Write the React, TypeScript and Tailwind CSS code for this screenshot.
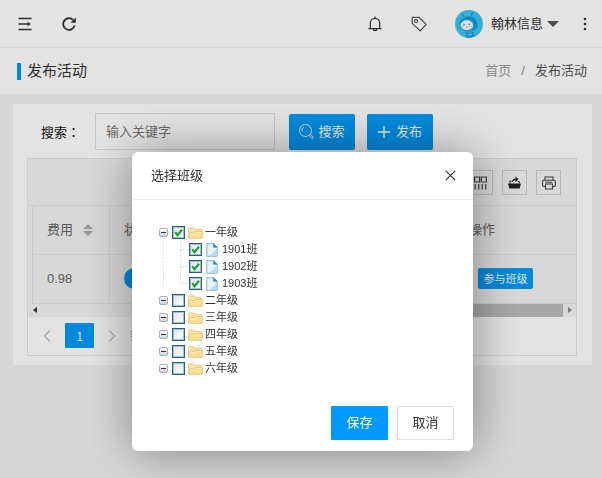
import { useState } from 'react';
import { clsx } from 'clsx';

const grades = [
  { name: '一年级', classes: ['1901班', '1902班', '1903班'] },
  { name: '二年级', classes: [] },
  { name: '三年级', classes: [] },
  { name: '四年级', classes: [] },
  { name: '五年级', classes: [] },
  { name: '六年级', classes: [] },
];

const MenuIcon = () => (
  <svg width="14" height="14" viewBox="0 0 14 14" fill="none" stroke="#333" strokeWidth="1.5">
    <path d="M0.5 1.5h13M0.5 7h6.5M0.5 12.5h13" />
    <path d="M7 7h3" />
    <path d="M9.5 4.8v4.4L13 7z" fill="#333" stroke="none" />
  </svg>
);

const RefreshIcon = () => (
  <svg width="14" height="14" viewBox="0 0 14 14" fill="none" stroke="#333" strokeWidth="1.8">
    <path d="M12.6 8.6A5.8 5.8 0 1 1 11.2 3" />
    <path d="M13.8 0.6v5.2H8.6z" fill="#333" stroke="none" />
  </svg>
);

const BellIcon = () => (
  <svg width="14" height="16" viewBox="0 0 14 16" fill="none" stroke="#333" strokeWidth="1.2">
    <path d="M2.3 12.2V7a4.7 4.7 0 0 1 9.4 0v5.2" />
    <path d="M0.4 12.6h13.2M7 2.3V0.6M5.2 12.8a1.8 1.9 0 0 0 3.6 0" />
  </svg>
);

const TagIcon = () => (
  <svg width="16" height="16" viewBox="0 0 16 16" fill="none" stroke="#444" strokeWidth="1.1" strokeLinejoin="round">
    <path d="M1.2 1.2h6.6l7.4 7.2-6 6.4L1.2 7.4z" />
    <circle cx="5" cy="5" r="1.5" />
  </svg>
);

const Avatar = () => (
  <svg width="28" height="28" viewBox="0 0 28 28">
    <circle cx="14" cy="14" r="14" fill="#3cc4ea" />
    <path d="M8 5.5l2 2.500M17 3.500l-1 3" stroke="#0f8fcc" strokeWidth="1" />
    <circle cx="7.800" cy="5" r="1.100" fill="#0f9de0" />
    <circle cx="17.400" cy="3.600" r="1.100" fill="#0f9de0" />
    <path d="M4.200 14.500C4.200 9 8.500 6.200 13.500 6.200S23 9 22.800 15c-.2 4.500-4 6.500-9.300 6.500s-9.300-2.500-9.300-7z" fill="#18a4e6" />
    <path d="M9.500 8.800c5-2.300 10.500 0 11.300 4.800.4 3-1 5-2.500 6" fill="none" stroke="#0b84c8" strokeWidth="1.100" />
    <ellipse cx="11.800" cy="15.300" rx="6.200" ry="5" fill="#f1f8fb" />
    <circle cx="9" cy="14.800" r=".7" fill="#445" />
    <circle cx="14.200" cy="14.300" r=".7" fill="#445" />
    <path d="M11 16.800q1 .7 1.800 0" fill="none" stroke="#b66" strokeWidth=".7" />
    <circle cx="7.600" cy="16.800" r=".9" fill="#f5b9c6" />
    <circle cx="15.800" cy="16.300" r=".9" fill="#f5b9c6" />
    <path d="M10.500 21.800l4 1.200 4-1.700 1.200 5a14 14 0 0 1-8.500 1.300z" fill="#1f9fdf" />
    <path d="M12.500 24.300l2.500 1 2-1.500" fill="none" stroke="#c9eefa" strokeWidth=".8" />
  </svg>
);

const SearchIcon = () => (
  <svg width="15" height="16" viewBox="0 0 15 16" fill="none" stroke="#fff" strokeWidth=".9">
    <circle cx="6.500" cy="6.500" r="6" />
    <path d="M3 7.500a3.600 3.600 0 0 1 2-4.300" />
    <path d="M10.300 11.500l1.200-1.200 3 3-1.200 1.500z" />
  </svg>
);

const ColumnsIcon = () => (
  <svg width="13" height="14" viewBox="0 0 13 14" fill="none" stroke="#444" strokeWidth="1.200">
    <path d="M.6 1h5v5h-5zM7.400 1h5v5h-5zM1.200 8v5.500M4.700 8v5.500M8.200 8v5.500M11.700 8v5.500" />
  </svg>
);

const ExportIcon = () => (
  <svg width="13" height="13" viewBox="0 0 13 13">
    <path d="M.3 7.500h12.400v.8l-1 4.200H1.300l-1-4.200z" fill="#222" />
    <path d="M1.800 7.500V5h1.700M9.800 5.500h1.500v2" fill="none" stroke="#333" />
    <path d="M3.800 6.500c.2-2.500 1.500-4 3.700-4V.5l3 2.800-3 2.700V4.400c-1.500 0-2.700.6-3.700 2.100z" fill="#222" />
  </svg>
);

const PrintIcon = () => (
  <svg width="14" height="14" viewBox="0 0 14 14" fill="none" stroke="#444" strokeWidth="1.100">
    <path d="M3 4V1h8v3M3 10.500H1.800q-1.200 0-1.200-1.200V5.500Q.6 4.200 1.800 4.200h10.400q1.200 0 1.200 1.300v3.800q0 1.200-1.200 1.200H11" />
    <path d="M3.500 8h7v5h-7zM3.500 6.200h7" />
  </svg>
);

const FolderIcon = () => (
  <svg width="15" height="12" viewBox="0 0 15 12">
    <path d="M.6 11V1.800q0-1 1-1h3.700l1.300 1.500h6.200q1 0 1 1v3" fill="#fbe3a2" stroke="#e6c27a" strokeWidth=".8" />
    <path d="M.6 11.200l.5-4.700q.1-.8.900-.8h4.500l1.300-1.200h6q.8 0 .8.800l-.3 5.200q-.1.900-1 .9z" fill="#fddf92" stroke="#e6bf6e" strokeWidth=".8" />
    <path d="M1.800 6.800h5l1.300-1.200h5.300" fill="none" stroke="#fff3cf" strokeWidth=".8" />
  </svg>
);

const FileIcon = () => (
  <svg width="12" height="14" viewBox="0 0 12 14">
    <path d="M.8.700h6.700l3.700 3.600v9H.8z" fill="#e6f3fc" stroke="#7fa9cc" strokeWidth=".9" />
    <path d="M3.500 12.900h7.300V6z" fill="#b5dcf7" />
    <path d="M7.500.700v3.600h3.700z" fill="#2f86c8" stroke="#3f7fb5" strokeWidth=".6" />
  </svg>
);

const ToolButton = ({ label, children }: any) => (
  <button aria-label={label} className="w-[25px] h-[25px] flex items-center justify-center border border-[#ccc]">
    {children}
  </button>
);

const TreeCheckbox = ({ label, defaultChecked }: any) => (
  <span className="relative flex">
    <input
      type="checkbox"
      aria-label={label}
      defaultChecked={defaultChecked}
      className="peer appearance-none w-[13px] h-[13px] border border-[#2a6078] bg-linear-to-br from-[#dfe4e6] to-white shadow-[inset_0_0_0_1px_#9fc3cf]"
    />
    <svg className="absolute inset-0 hidden peer-checked:block pointer-events-none" width="13" height="13" viewBox="0 0 13 13">
      <path d="M3.200 6.200l2.300 3L10 3.800" fill="none" stroke="#1ba135" strokeWidth="2.200" />
    </svg>
  </span>
);

const ClassTree = () => (
  <ul className="text-[11px] leading-[17px] text-[#333]">
    {grades.map((grade, i) => (
      <li key={grade.name}>
        <div className="flex items-center h-[17px]">
          <button aria-label={`收起${grade.name}`} className="w-[9px] h-[9px] mr-1 flex items-center justify-center rounded-[2px] border border-[#a3b1bb] bg-linear-to-b from-white to-[#ccd4da]">
            <span className="w-[5px] h-px bg-[#333]" />
          </button>
          <TreeCheckbox label={grade.name} defaultChecked={i === 0} />
          <span className="ml-[3px] mr-0.5"><FolderIcon /></span>
          <span>{grade.name}</span>
        </div>
        {grade.classes.length > 0 && (
          <ul>
            {grade.classes.map((name, j) => (
              <li key={name} className="flex items-center h-[17px]">
                <span className="ml-1 w-[17px] h-full border-l border-dotted border-[#ddd]" />
                <span className="w-2 h-full mr-px flex flex-col">
                  <span className="flex-1 border-l border-b border-dotted border-[#ddd]" />
                  <span className={clsx('flex-1', j < grade.classes.length - 1 && 'border-l border-dotted border-[#ddd]')} />
                </span>
                <TreeCheckbox label={name} defaultChecked />
                <span className="ml-1 mr-1"><FileIcon /></span>
                <span>{name}</span>
              </li>
            ))}
          </ul>
        )}
      </li>
    ))}
  </ul>
);

const ClassDialog = ({ onClose }: any) => (
  <div className="fixed inset-0 z-20 flex items-start justify-center bg-black/10 pt-[152px] pl-[3px]">
    <div role="dialog" aria-label="选择班级" className="w-[341px] rounded-md bg-white shadow-[1px_1px_50px_rgba(0,0,0,0.4)]">
      <div className="h-12 pl-[19px] pr-[17px] flex items-center justify-between border-b border-[#eee] text-[#333]">
        <h2>选择班级</h2>
        <button aria-label="关闭" onClick={onClose}>
          <svg width="11" height="11" viewBox="0 0 11 11" stroke="#333" strokeWidth="1.200">
            <path d="M.8.800l9.400 9.400M10.200.800L.8 10.200" />
          </svg>
        </button>
      </div>
      <div className="pt-6 pl-[27px] h-[206px]">
        <ClassTree />
      </div>
      <div className="flex justify-end gap-[9px] pr-[19px] pb-[11px]">
        <button onClick={onClose} className="w-[57px] h-[34px] rounded-[1px] bg-[#0199ff] text-white">保存</button>
        <button onClick={onClose} className="w-[57px] h-[34px] rounded-[1px] border border-[#dedede] text-[#333]">取消</button>
      </div>
    </div>
  </div>
);

export default function App() {
  const [open, setOpen] = useState(true);

  return (
    <div className="min-h-screen bg-[#f0f0f0] text-[13px] leading-5 text-[#666] font-['Liberation_Sans','Noto_Sans_CJK_SC',sans-serif]">
      {/* Top bar */}
      <header className="h-12 pl-[18px] pr-[15px] flex items-center justify-between bg-[#fdfdfd] border-b border-[#f0f0f0]">
        <div className="flex items-center gap-[30px]">
          <button aria-label="菜单"><MenuIcon /></button>
          <button aria-label="刷新"><RefreshIcon /></button>
        </div>
        <div className="flex items-center text-[#333]">
          <button aria-label="消息" className="mr-[29px]"><BellIcon /></button>
          <button aria-label="标签" className="mr-7"><TagIcon /></button>
          <button className="flex items-center mr-6">
            <Avatar />
            <span className="ml-2 mr-1">翰林信息</span>
            <svg width="12" height="6" viewBox="0 0 12 6"><path d="M0 0h12L6 6z" fill="#555" /></svg>
          </button>
          <button aria-label="更多">
            <svg width="4" height="14" viewBox="0 0 4 14" fill="#333">
              <circle cx="2" cy="2" r="1.300" />
              <circle cx="2" cy="7" r="1.300" />
              <circle cx="2" cy="12" r="1.300" />
            </svg>
          </button>
        </div>
      </header>

      {/* Page title */}
      <div className="h-[46px] pl-[17px] pr-[15px] flex items-center justify-between bg-[#fdfdfd]">
        <div className="flex items-center gap-1.5">
          <span className="w-1 h-[17px] bg-[#0199e8]" />
          <h1 className="text-[15px] text-[#333]">发布活动</h1>
        </div>
        <nav className="flex gap-[10px]">
          <a href="#" className="text-[#999]">首页</a>
          <span className="text-[#888]">/</span>
          <span className="text-[#555]">发布活动</span>
        </nav>
      </div>

      <main className="ml-[13px] mr-[10px] mt-[10px] pl-[14px] pr-[15px] py-[9px] bg-[#fdfdfd]">
        <div className="flex items-center mb-2 pl-[14px]">
          <label htmlFor="keyword" className="w-[54px] text-[#111] font-['Noto_Sans_CJK_TC',sans-serif]">搜索：</label>
          <input
            id="keyword"
            placeholder="输入关键字"
            className="w-[180px] h-[37px] px-[10px] mr-[14px] border border-[#ddd] placeholder:text-[#757575]"
          />
          <button className="w-[66px] h-9 mr-3 flex items-center justify-center gap-1 rounded-[2px] bg-[#0199f5] text-white">
            <SearchIcon />搜索
          </button>
          <button className="w-[66px] h-9 flex items-center justify-center gap-1.5 rounded-[2px] bg-[#0199f5] text-white">
            <svg width="12" height="12" viewBox="0 0 12 12" stroke="#fff" strokeWidth="1.500"><path d="M6 0v12M0 6h12" /></svg>
            发布
          </button>
        </div>

        <div className="border border-[#e3e3e3]">
          <div className="h-[47px] pt-px pr-[15px] flex items-center justify-end gap-[9px] bg-[#f1f1f1] border-b border-[#e3e3e3]">
            <ToolButton label="筛选列"><ColumnsIcon /></ToolButton>
            <ToolButton label="导出"><ExportIcon /></ToolButton>
            <ToolButton label="打印"><PrintIcon /></ToolButton>
          </div>
          <div className="pl-1 bg-[#f1f1f1]">
            <table className="w-full table-fixed text-left">
              <thead>
                <tr className="h-12 border-b border-[#e3e3e3]">
                  <th className="w-[77px] pl-[14px] border-x border-[#e3e3e3] font-normal">
                    <div className="flex items-center gap-[10px]">
                      费用
                      <svg width="10" height="12" viewBox="0 0 10 12" fill="#aaa"><path d="M0 5h10L5 0zM0 7h10l-5 5z" /></svg>
                    </div>
                  </th>
                  <th className="pl-[14px] font-normal">状态</th>
                  <th className="w-[122px] pl-[15px] font-normal">操作</th>
                </tr>
              </thead>
              <tbody>
                <tr className="h-[49px] border-b border-[#e3e3e3]">
                  <td className="pl-[14px] border-x border-[#e3e3e3]">0.98</td>
                  <td className="pl-[14px]">
                    <button aria-label="状态" className="block w-12 h-[21px] rounded-full bg-[#0199f5]" />
                  </td>
                  <td className="pl-6">
                    <button onClick={() => setOpen(true)} className="block w-[55px] h-[21px] rounded-[2px] bg-[#0199f5] text-[11px] text-white">
                      参与班级
                    </button>
                  </td>
                </tr>
              </tbody>
            </table>
          </div>
          {/* Horizontal scrollbar */}
          <div className="h-[13px] pl-[5px] pr-1 flex items-center bg-[#f1f1f1]">
            <svg width="4" height="6" viewBox="0 0 4 6"><path d="M4 0v6L0 3z" fill="#333" /></svg>
            <div className="flex-1 h-full ml-[160px] mr-[5px] bg-[#bbb]" />
            <svg width="4" height="6" viewBox="0 0 4 6"><path d="M0 0v6l4-3z" fill="#888" /></svg>
          </div>
          <div className="h-[38px] pl-[15px] flex items-center">
            <button aria-label="上一页">
              <svg width="8" height="12" viewBox="0 0 8 12" fill="none" stroke="#bbb" strokeWidth="1.300"><path d="M7 .5L1.500 6 7 11.500" /></svg>
            </button>
            <button className="w-[29px] h-[25px] mx-[14px] rounded-[1px] bg-[#0199f5] text-xs text-white font-['Noto_Sans_CJK_SC',sans-serif]">1</button>
            <button aria-label="下一页">
              <svg width="8" height="12" viewBox="0 0 8 12" fill="none" stroke="#bbb" strokeWidth="1.300"><path d="M1 .5L6.500 6 1 11.500" /></svg>
            </button>
            <span className="ml-[14px] text-[11px]">到第</span>
          </div>
        </div>
      </main>

      {open && <ClassDialog onClose={() => setOpen(false)} />}
    </div>
  );
}
